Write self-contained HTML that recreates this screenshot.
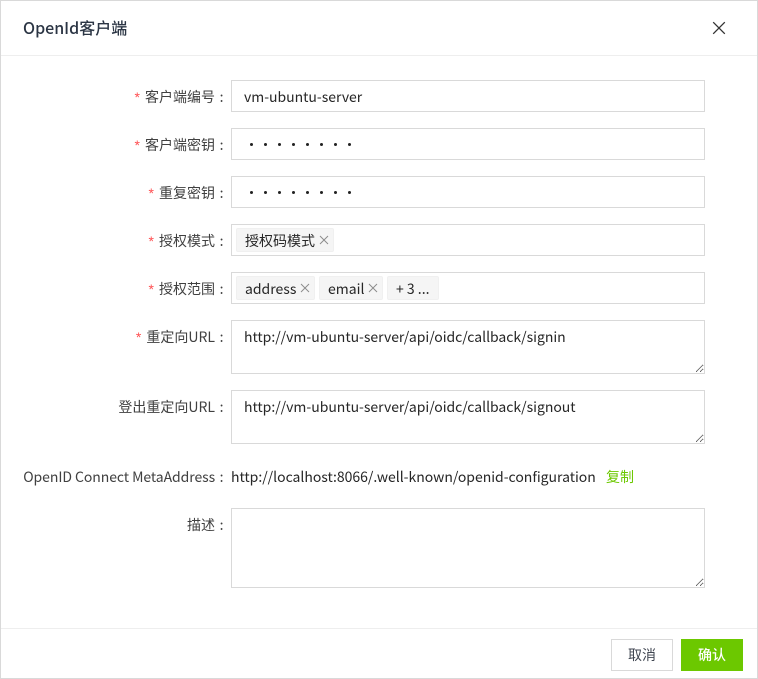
<!DOCTYPE html>
<html lang="zh">
<head>
<meta charset="utf-8">
<style>
html,body{margin:0;padding:0;background:#fff}
body{width:758px;height:679px;position:relative;overflow:hidden;font-family:"Noto Sans CJK SC","Liberation Sans",sans-serif;font-size:14px;color:#262626}
div,span,textarea{box-sizing:border-box}
.a{position:absolute}
.modal{left:0;top:0;width:758px;height:679px;border:1px solid #d9d9d9}
.hl{left:1px;width:756px;height:1px;background:#eeeeee}
.title{left:23px;top:15px;line-height:24px;font-size:16px;font-weight:500;color:#2b3544;white-space:nowrap}
.lbl{right:534.5px;line-height:22px;white-space:nowrap;color:#404040;text-align:right}
.lbl i{font-style:normal;color:#ff4d4f;margin-right:5px;font-family:"Liberation Sans",sans-serif}
.lbl b{font-weight:400;margin:0 0 0 1.5px}
.box{left:231px;width:474px;border:1px solid #d9d9d9;background:#fff}
.val{left:244px;line-height:22px;white-space:nowrap;color:#262626;letter-spacing:-.02px}
.tag{height:24px;background:#f5f5f5;border:1px solid #f0f0f0;border-radius:2px;line-height:24px;padding-left:8px;white-space:nowrap}
.dots{left:244px;white-space:nowrap}
.dots span{position:absolute;top:0;width:3px;height:3px;border-radius:50%;background:#222}
.btn{top:639px;width:62px;height:32px;line-height:30px;text-align:center;font-size:14px}
</style>
</head>
<body>
<div class="a modal"></div>
<div class="a hl" style="top:55px"></div>
<div class="a hl" style="top:628px"></div>
<div class="a title">OpenId客户端</div>
<svg class="a" style="left:711px;top:20px" width="16" height="16" viewBox="0 0 16 16"><path d="M2.2 2.2L13.8 13.8M13.8 2.2L2.2 13.8" stroke="#333" stroke-width="1.3" fill="none"/></svg>

<div class="a lbl" style="top:86px"><i>*</i>客户端编号<b> :</b></div>
<div class="a box" style="top:80px;height:32px"></div>
<div class="a val" style="top:86px">vm-ubuntu-server</div>

<div class="a lbl" style="top:134px"><i>*</i>客户端密钥<b> :</b></div>
<div class="a box" style="top:128px;height:32px"></div>
<div class="a dots" style="top:143px"><span style="left:6px"></span><span style="left:20px"></span><span style="left:34px"></span><span style="left:48px"></span><span style="left:62px"></span><span style="left:76px"></span><span style="left:90px"></span><span style="left:104px"></span></div>

<div class="a lbl" style="top:182px"><i>*</i>重复密钥<b> :</b></div>
<div class="a box" style="top:176px;height:32px"></div>
<div class="a dots" style="top:191px"><span style="left:6px"></span><span style="left:20px"></span><span style="left:34px"></span><span style="left:48px"></span><span style="left:62px"></span><span style="left:76px"></span><span style="left:90px"></span><span style="left:104px"></span></div>

<div class="a lbl" style="top:230px"><i>*</i>授权模式<b> :</b></div>
<div class="a box" style="top:224px;height:32px"></div>
<div class="a tag" style="left:236px;top:228px;width:98px">授权码模式</div>
<svg class="a" style="left:319px;top:235px" width="10" height="10" viewBox="0 0 10 10"><path d="M1 1L9 9M9 1L1 9" stroke="#8c8c8c" stroke-width="1" fill="none"/></svg>

<div class="a lbl" style="top:278px"><i>*</i>授权范围<b> :</b></div>
<div class="a box" style="top:272px;height:32px"></div>
<div class="a tag" style="left:236px;top:276px;width:79px">address</div>
<svg class="a" style="left:300px;top:283px" width="10" height="10" viewBox="0 0 10 10"><path d="M1 1L9 9M9 1L1 9" stroke="#8c8c8c" stroke-width="1" fill="none"/></svg>
<div class="a tag" style="left:319px;top:276px;width:64px">email</div>
<svg class="a" style="left:368px;top:283px" width="10" height="10" viewBox="0 0 10 10"><path d="M1 1L9 9M9 1L1 9" stroke="#8c8c8c" stroke-width="1" fill="none"/></svg>
<div class="a tag" style="left:387px;top:276px;width:52px">+ 3 ...</div>

<div class="a lbl" style="top:326px"><i>*</i>重定向URL<b> :</b></div>
<textarea class="a box" style="top:320px;height:54px;outline:none;padding:0;margin:0"></textarea>
<div class="a val" style="top:326px">http://vm-ubuntu-server/api/oidc/callback/signin</div>

<div class="a lbl" style="top:396px">登出重定向URL<b> :</b></div>
<textarea class="a box" style="top:390px;height:54px;outline:none;padding:0;margin:0"></textarea>
<div class="a val" style="top:396px">http://vm-ubuntu-server/api/oidc/callback/signout</div>

<div class="a lbl" style="top:466px;letter-spacing:-.07px">OpenID Connect MetaAddress<b> :</b></div>
<div class="a val" style="left:231px;top:466px">http://localhost:8066/.well-known/openid-configuration</div>
<div class="a val" style="left:606px;top:466px;color:#6cc800">复制</div>

<div class="a lbl" style="top:514px">描述<b> :</b></div>
<textarea class="a box" style="top:508px;height:80px;outline:none;padding:0;margin:0"></textarea>

<div class="a btn" style="left:611px;border:1px solid #d9d9d9;background:#fff;color:#404651">取消</div>
<div class="a btn" style="left:681px;background:#6cc800;color:#fff;line-height:32px;font-weight:500">确认</div>
</body>
</html>
